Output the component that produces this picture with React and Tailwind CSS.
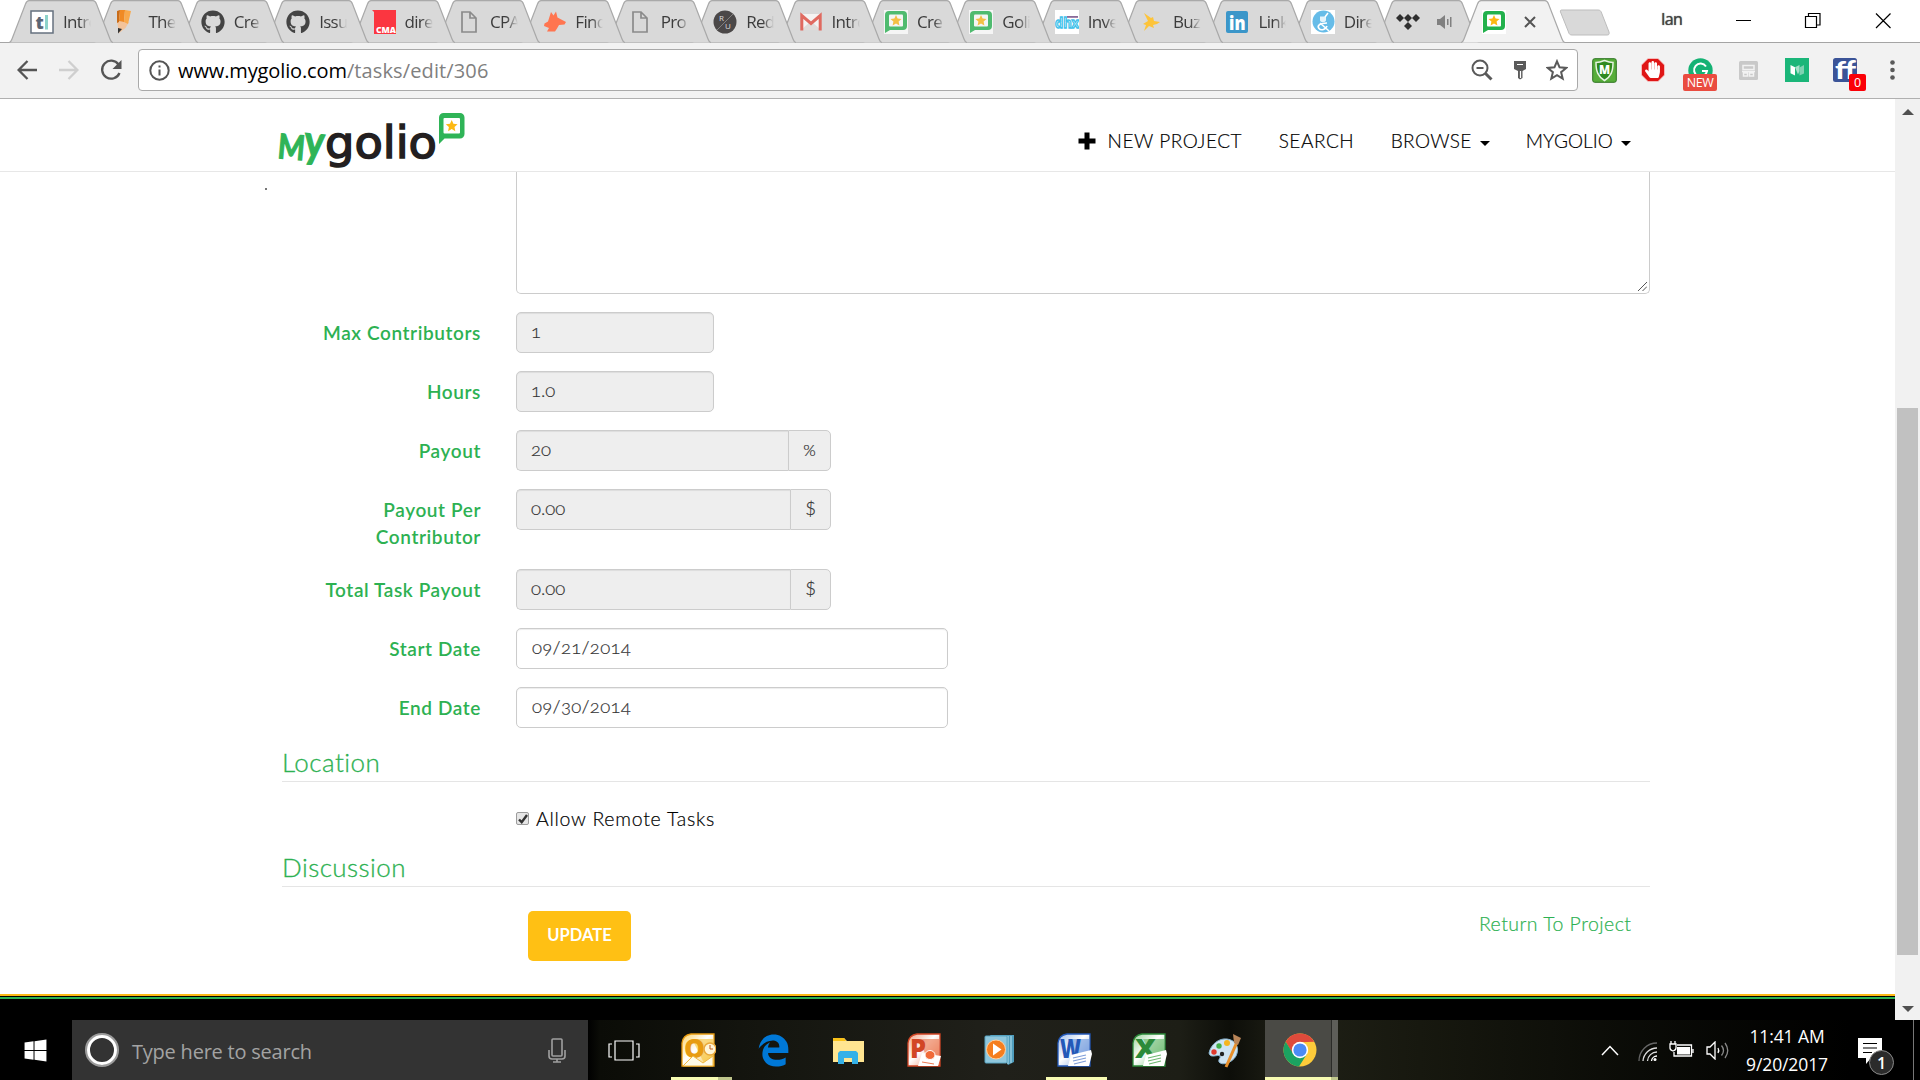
import React from 'react';
import { FaGithub, FaEdgeLegacy, FaWindows, FaHandPaper } from 'react-icons/fa';

function GolioIcon({ muted }) {
  return (
    <svg width="24" height="24" viewBox="0 0 24 24" className={muted ? 'opacity-75' : ''}>
      <rect width="24" height="24" fill="#fff" />
      <path d="M1 23V5a4 4 0 0 1 4-4h14a4 4 0 0 1 4 4v11a4 4 0 0 1-4 4H6z" fill="#22b14c" />
      <rect x="5" y="4.500" width="14" height="12" rx="1" fill="#fff" />
      <path d="M12 5l1.600 3.600 3.900.4-2.900 2.600.8 3.800L12 13.500l-3.400 1.900.8-3.800L6.500 9l3.900-.4z" fill="#fdb813" />
    </svg>
  );
}

const icons = {
  tl: (
    <svg width="24" height="24" viewBox="0 0 24 24">
      <rect x="1" y="1" width="22" height="22" fill="#fff" stroke="#66717f" strokeWidth="1.500" />
      <text x="5.500" y="19" fontFamily="Open Sans" fontWeight="800" fontSize="18" fill="#5b6675">t</text>
      <rect x="15" y="5" width="3" height="14.500" fill="#8ed3cb" />
    </svg>
  ),
  pencil: (
    <svg width="24" height="24" viewBox="0 0 24 24">
      <path d="M2 11l12 1-3.500 6L4 23z" fill="#f3c39a" />
      <path d="M2 1l3-1-1 12-2 1z" fill="#c96c19" />
      <path d="M5 0h5l-1 12-5-1z" fill="#f08a24" />
      <path d="M10 0l6 1-3 13-4-2z" fill="#f9a94b" />
      <path d="M3 18l4 1-4 4.500z" fill="#333" />
    </svg>
  ),
  github: <FaGithub size={24} color="#444" />,
  cma: (
    <svg width="24" height="24" viewBox="0 0 24 24">
      <path d="M0 0h24v24H2V2z" fill="#fb3640" />
      <text x="4" y="23" fontFamily="Open Sans" fontWeight="800" fontSize="8.500" fill="#fff">CMA</text>
    </svg>
  ),
  file: (
    <svg width="24" height="24" viewBox="0 0 24 24" fill="none" stroke="#8a8a8a" strokeWidth="1.700">
      <path d="M5 2h8l6 6v14H5zM13 2v6h6" />
    </svg>
  ),
  fox: (
    <svg width="24" height="24" viewBox="0 0 24 24" fill="#ff7550">
      <path d="M9 2l2.500 3.500L14 1.500l1.500 6L24 12l-1.500 2.500-5.500.5-2 3.500-2 3H5l2-3.500-5-2 .500-2.500 3.500-2z" />
    </svg>
  ),
  ru: (
    <svg width="24" height="24" viewBox="0 0 24 24">
      <circle cx="12" cy="12" r="11.500" fill="#4b4848" />
      <path d="M4 20L20 4" stroke="#999" strokeWidth=".7" />
      <text x="6" y="11" fontFamily="Open Sans" fontSize="8" fill="#ddd">R</text>
      <text x="12" y="19" fontFamily="Open Sans" fontSize="8" fill="#ddd">U</text>
    </svg>
  ),
  gmail: (
    <svg width="24" height="24" viewBox="0 0 24 24">
      <rect x="2" y="4" width="20" height="16" fill="#f5f3f2" />
      <path d="M2 20l10-9 10 9z" fill="#e0dcda" />
      <path d="M2.800 20.500V5.500L12 13.500l9.200-8v15" fill="none" stroke="#e06a60" strokeWidth="3" />
    </svg>
  ),
  golio: <GolioIcon muted />,
  golioActive: <GolioIcon />,
  dhx: (
    <svg width="24" height="24" viewBox="0 0 24 24">
      <rect width="24" height="24" fill="#fff" />
      <text x="0" y="18" fontFamily="Open Sans" fontWeight="700" fontSize="14" fill="#dff5fc" stroke="#3fc1ea" strokeWidth="1.300" textLength="24" lengthAdjust="spacingAndGlyphs">dhx</text>
      <rect x="12" y="6" width="11" height="1.800" fill="#8a6a9a" />
    </svg>
  ),
  buz: (
    <svg width="24" height="24" viewBox="0 0 24 24" fill="#fdc43a">
      <path d="M4 3l7 5 2-1 1 4 6 1-3 2-4 1 1 3-5-2-5 5 2-6-3-1 5-3z" />
    </svg>
  ),
  linkedin: (
    <svg width="24" height="24" viewBox="0 0 24 24">
      <rect x="1" y="1" width="22" height="22" rx="2" fill="#3b96c9" />
      <text x="4" y="19.500" fontFamily="Open Sans" fontWeight="800" fontSize="18.500" fill="#fff" textLength="16.500" lengthAdjust="spacingAndGlyphs">in</text>
    </svg>
  ),
  dire: (
    <svg width="24" height="24" viewBox="0 0 24 24">
      <rect width="24" height="24" fill="#fff" />
      <ellipse cx="12.500" cy="11.500" rx="11" ry="11" fill="#66bce8" />
      <path d="M9 6.500h6v3.500q0 2-3 2t-3-2z" fill="#e4f4fc" />
      <path d="M17 3l-3 4M9 13l9 8M16 13c-8 0-10 3-8 5.500s7 1 8-2.500" fill="none" stroke="#fff" strokeWidth="1.600" />
    </svg>
  ),
  tidal: (
    <svg width="24" height="24" viewBox="0 0 24 24" fill="#2f2f2f">
      <path d="M4 4l4 4-4 4-4-4zM12 4l4 4-4 4-4-4zM20 4l4 4-4 4-4-4zM12 12l4 4-4 4-4-4z" />
    </svg>
  ),
};

const tabs = [
  ['tl', 'Intro'], ['pencil', 'The'], ['github', 'Cre'], ['github', 'Issue'], ['cma', 'dire'], ['file', 'CPA'],
  ['fox', 'Find'], ['file', 'Pro'], ['ru', 'Red'], ['gmail', 'Intro'], ['golio', 'Cre'], ['golio', 'Goli'],
  ['dhx', 'Inve'], ['buz', 'Buz'], ['linkedin', 'Link'], ['dire', 'Dire'], ['tidal', 'speaker'], ['golioActive', 'close'],
];

function Tab({ icon, label }) {
  const active = label === 'close';
  return (
    <div className={active ? 'relative z-10 h-[43px] w-[85.4px] shrink-0' : 'relative h-[43px] w-[85.4px] shrink-0'}>
      <svg width="104" height="43" className="absolute left-0 top-0">
        <path
          d="M0 42.500C2 42 2.500 40.500 3 39L16.500 4C17.500 1.500 18 .7 20 .7H84C86 .7 86.500 1.500 87.500 4L101 39C101.500 40.500 102 42 104 42.500"
          fill={active ? '#f2f2f2' : '#d9d9d9'}
          stroke="#a9a9a9"
          strokeWidth="1.200"
        />
      </svg>
      <div className="relative flex items-center pl-[21px] pt-[10px]">
        <span className="block h-6 w-6 shrink-0">{icons[icon]}</span>
        {label === 'speaker' && (
          <svg width="16" height="14" viewBox="0 0 16 14" className="ml-[17px] shrink-0" fill="#808080">
            <path d="M0 4h3l5-4v14l-5-4H0zM10 4h1.500v6H10zM13 2h1.500v10H13z" />
          </svg>
        )}
        {active && (
          <svg width="12" height="12" viewBox="0 0 12 12" className="ml-[18px] shrink-0" stroke="#555" strokeWidth="2">
            <path d="M1 1l10 10M11 1L1 11" />
          </svg>
        )}
        {label !== 'speaker' && !active && (
          <span className="ml-[9px] block w-[28px] overflow-hidden whitespace-nowrap font-['Open_Sans'] text-[17px] leading-6 tracking-[-0.7px] text-[#3c3c3c] [mask-image:linear-gradient(to_right,black_60%,transparent)]">
            {label}
          </span>
        )}
      </div>
    </div>
  );
}

function TabStrip() {
  return (
    <div className="relative flex h-[43px] bg-white pl-[9px]">
      <div className="absolute inset-x-0 bottom-0 h-px bg-[#a5a5a5]" />
      <div className="relative flex flex-row-reverse">
        {[...tabs].reverse().map(([icon, label], i) => <Tab key={i} icon={icon} label={label} />)}
      </div>
      <svg width="54" height="28" viewBox="0 0 54 28" className="ml-[13px] mt-[9px]">
        <path d="M3 1H39C41 1 42 2 42.600 4L50 23C50.500 25 50 26 48 26H13C11 26 10 25 9.500 23L1.500 3C1 1.500 1.500 1 3 1z" fill="#d9d9d9" stroke="#bdbdbd" />
      </svg>
      <div className="ml-auto flex pr-[29px] pt-[9px]">
        <span className="mr-[54px] mt-[-1px] font-['Open_Sans'] text-[16px] leading-[22px] tracking-[-0.7px] text-[#444] [text-shadow:0_0_1px_#333]">Ian</span>
        <svg width="155" height="22" viewBox="0 0 155 22" fill="none" stroke="#000" strokeWidth="1.200">
          <path d="M0 11.500h15M69.500 7.500h11v11h-11zM72.500 7.500v-3h11.500v11.500h-3.500M140 4.500l14.500 14.500M154.500 4.500L140 19" />
        </svg>
      </div>
    </div>
  );
}

function Toolbar() {
  return (
    <div className="flex h-14 items-center border-b border-[#b0b0b0] bg-[#f2f2f2] pl-[17px] pb-px">
      <svg width="106" height="24" viewBox="0 0 106 24" fill="none" strokeWidth="2.300">
        <path d="M20 12H2M10.500 3L1.600 12l8.900 9" stroke="#555" />
        <path d="M42 12h18M51.500 3l8.900 9-8.900 9" stroke="#cfcfcf" />
        <path d="M101.500 6.500A9 9 0 1 0 102.500 15" stroke="#555" />
        <path d="M104.500 2v9h-9z" fill="#555" />
      </svg>
      <div className="ml-[15px] flex h-[42px] w-[1440px] items-center rounded-[4px] border border-[#a9a9a9] bg-white pl-[10px]">
        <svg width="21" height="21" viewBox="0 0 21 21" fill="none" stroke="#555" strokeWidth="2">
          <circle cx="10.500" cy="10.500" r="9.200" />
          <path d="M10.500 9.500v6M10.500 5.500v2" />
        </svg>
        <span className="ml-2 mt-0.5 font-['Open_Sans'] text-[20px] leading-[26px] tracking-[-0.12px] text-black">www.mygolio.com</span>
        <span className="mt-0.5 font-['Open_Sans'] text-[20px] leading-[26px] tracking-[0.12px] text-[#808080]">/tasks/edit/306</span>
        <svg width="22" height="22" viewBox="0 0 22 22" fill="none" stroke="#5a5a5a" strokeWidth="2" className="ml-auto">
          <circle cx="9" cy="9" r="7.500" /><path d="M14.500 14.500l6 6" strokeWidth="3" /><path d="M5.500 9h7" />
        </svg>
        <svg width="14" height="20" viewBox="0 0 14 20" className="ml-[20px]">
          <path d="M1 1h12v8l-3.500 2v7L7 19.500 5 18v-7L1 9z" fill="#5a5a5a" /><path d="M4 4.500h6M7.500 11v7" stroke="#fff" strokeWidth="1.200" />
        </svg>
        <svg width="22" height="22" viewBox="0 0 24 24" fill="none" stroke="#5a5a5a" strokeWidth="2.200" className="ml-[19px] mr-[9px]">
          <path d="M12 2.500l2.800 6.600 7.200.6-5.500 4.700 1.700 7L12 17.600l-6.200 3.800 1.700-7L2 9.700l7.200-.6z" />
        </svg>
      </div>
      <div className="relative ml-[14px] flex items-center">
        <svg width="25" height="25" viewBox="0 0 25 25">
          <rect x=".7" y=".7" width="23.600" height="23.600" rx="2" fill="#57ad3a" stroke="#2c7420" />
          <path d="M4 4.500c3 0 6-1 8.500-2 2.500 1 5.500 2 8.500 2 0 9-2 14-8.500 18C6 18.500 4 13.500 4 4.500z" fill="#2f8a20" stroke="#e6f3e2" strokeWidth="1.500" />
          <text x="7" y="15.500" fontFamily="Open Sans" fontWeight="800" fontSize="11.500" fill="#fff">M</text>
        </svg>
        <span className="relative ml-6 block h-[24px] w-[24px]">
          <svg width="24" height="24" viewBox="0 0 24 24"><path d="M7 .5h10L23.500 7v10L17 23.500H7L.5 17V7z" fill="#e01616" stroke="#f7c9c9" strokeWidth=".8" /></svg>
          <FaHandPaper size={17} color="#fff" className="absolute left-[3px] top-[3px]" />
        </span>
        <span className="relative ml-[23px] block h-[25px] w-[25px]">
          <svg width="25" height="25" viewBox="0 0 25 25"><circle cx="12.500" cy="12.500" r="12.200" fill="#15b274" /><path d="M18 8.500A6.500 6.500 0 1 0 19 13h-5" fill="none" stroke="#fff" strokeWidth="2" /></svg>
          <span className="absolute left-[-5px] top-[16px] block h-[17px] w-[34px] rounded-[2px] bg-[#ea4c40] text-center font-['Open_Sans'] text-[12.500px] leading-[18px] tracking-[-0.4px] text-white">NEW</span>
        </span>
        <svg width="19" height="19" viewBox="0 0 19 19" className="ml-[26px]">
          <rect width="19" height="19" rx="1.500" fill="#c9c9c9" />
          <path d="M4 4.500h11v4H4zM3 10.500h13M4.500 12h4v3h-4zM10.500 12h4v3h-4z" fill="none" stroke="#f2f2f2" strokeWidth="1.500" />
        </svg>
        <svg width="24" height="24" viewBox="0 0 24 24" className="ml-[27px]">
          <rect width="24" height="24" fill="#1bb679" />
          <path d="M5.500 7l4.500 2.200v8.300l-4.500-2.200z" fill="#fff" /><path d="M10 9.200l4.500-2.200v6l-1.500 3.500z" fill="#a6e0c9" /><path d="M14.500 9.500L19 7v8.500l-4.500 2z" fill="#7fd2b2" />
        </svg>
        <span className="relative ml-[24px] block h-6 w-6">
          <svg width="24" height="24" viewBox="0 0 24 24">
            <rect width="24" height="24" rx="2.500" fill="#3b5498" />
            <text x="2" y="21" fontFamily="Lato" fontWeight="900" fontSize="25" fill="#fff" textLength="21" lengthAdjust="spacingAndGlyphs">ff</text>
          </svg>
          <span className="absolute left-[16px] top-[16px] block h-[17px] w-[17px] rounded-[2px] bg-[#fb0007] text-center font-['Open_Sans'] text-[12.500px] leading-[18px] text-white">0</span>
        </span>
        <svg width="5" height="20" viewBox="0 0 5 20" fill="#5a5a5a" className="ml-[33px]">
          <circle cx="2.500" cy="2.500" r="2.300" /><circle cx="2.500" cy="10" r="2.300" /><circle cx="2.500" cy="17.500" r="2.300" />
        </svg>
      </div>
    </div>
  );
}

function Logo() {
  return (
    <svg width="188" height="60" viewBox="278 111 188 60" className="ml-[278px] mt-3 block overflow-visible">
      <g fill="#2fb457" stroke="#2fb457" strokeWidth="1.200" transform="rotate(5 300 147)">
        <text x="278" y="160" fontFamily="Lato" fontWeight="700" fontSize="34" textLength="27" lengthAdjust="spacingAndGlyphs">M</text>
        <text x="304" y="156" fontFamily="Lato" fontWeight="700" fontSize="45" textLength="20" lengthAdjust="spacingAndGlyphs">y</text>
      </g>
      <text x="325" y="158" className="font-['DejaVu_Sans']" fontSize="44.500" fill="#231f20" stroke="#231f20" strokeWidth="1.500" textLength="112" lengthAdjust="spacingAndGlyphs">golio</text>
      <path d="M439 144v-26.500a4.500 4.500 0 0 1 4.500-4.500h16.500a4.500 4.500 0 0 1 4.500 4.500v16.500a4.500 4.500 0 0 1-4.500 4.500H444.500z" fill="#2fb457" />
      <rect x="443.500" y="118" width="16.500" height="15.500" rx="1" fill="#fff" />
      <path d="M451.700 120l1.700 3.700 4.200.5-3.100 2.800.8 4.200-3.600-2.100-3.600 2.100.8-4.200-3.100-2.800 4.200-.5z" fill="#fdb913" />
    </svg>
  );
}

function Caret() {
  return <span className="ml-2 mt-[5px] block border-x-[5px] border-t-[5px] border-x-transparent border-t-black" />;
}

function Nav() {
  return (
    <div className="flex h-[73px] items-start border-b border-[#e7e7e7] bg-white">
      <Logo />
      <nav className="ml-auto mr-[264px] mt-[28px] flex h-[27px] items-center font-['Lato'] text-[19px] font-light leading-[27px] tracking-[0.55px] text-black [-webkit-text-stroke:0.2px]">
        <span className="flex items-center">
          <svg width="18" height="18" viewBox="0 0 18 18" className="mr-[12px]"><path d="M6.500 .5h5v6h6v5h-6v6h-5v-6h-6v-5h6z" /></svg>
          NEW PROJECT
        </span>
        <span className="ml-[36.500px]">SEARCH</span>
        <span className="ml-[36.500px] flex items-center tracking-[0.35px]">BROWSE<Caret /></span>
        <span className="ml-[36px] flex items-center tracking-[0.1px]">MYGOLIO<Caret /></span>
      </nav>
    </div>
  );
}

function Row({ label, children }) {
  return (
    <div className="mt-[18px] flex items-start">
      <label className="mr-[-1px] w-[199px] shrink-0 pt-[7px] text-right text-[19px] font-semibold leading-[27px] tracking-[0.6px] text-[#2db152]">{label}</label>
      <div className="ml-9 mb-[-7px] flex h-[41px]">{children}</div>
    </div>
  );
}

const value = "flex items-center border border-[#ccc] pb-[2px] shadow-[inset_0_1px_1px_rgba(0,0,0,0.075)] text-[18.500px] font-light text-[#333] [-webkit-text-stroke:0.2px] [font-feature-settings:'onum']";

function Field({ text, wide }) {
  return (
    <div className={`${value} ${wide ? 'w-[432px] bg-white pl-[15px] tracking-[0.3px]' : 'w-[198px] bg-[#eee] pl-[14px]'} rounded-[5px]`}>{text}</div>
  );
}

function Addon({ text, unit }) {
  return (
    <>
      <div className={`${value} ${unit === '%' ? 'w-[272px]' : 'w-[274px]'} rounded-l-[5px] border-r-0 bg-[#eee] pl-[14px]`}>{text}</div>
      <div className={`${unit === '%' ? 'w-[43px] text-[16px]' : 'w-[41px] text-[18.500px]'} flex items-center justify-center rounded-r-[5px] border border-[#ccc] bg-[#eee] pb-0.5 font-light text-[#333] [-webkit-text-stroke:0.2px]`}>{unit}</div>
    </>
  );
}

function Heading({ children, className }) {
  return <h3 className={`${className} mr-[245px] border-b border-[#e5e5e5] text-[26px] font-light leading-[37px] tracking-[0.45px] text-[#2db152] [-webkit-text-stroke:0.3px]`}>{children}</h3>;
}

function Page() {
  return (
    <div className="flex h-[921px]">
      <div className="flex w-[1895px] flex-col overflow-hidden bg-white font-['Lato']">
        <Nav />
        <div className="flex h-[122px] shrink-0">
          <span className="ml-[264.500px] mt-[16px] h-[2px] w-[2px] bg-[#777]" />
          <div className="ml-[249.500px] flex w-[1134px] items-end justify-end rounded-b-[5px] border border-t-0 border-[#ccc] p-0.5">
            <svg width="9" height="9" viewBox="0 0 9 9" stroke="#555" strokeWidth="1"><path d="M0 9L9 0M4.500 9L9 4.500" /></svg>
          </div>
        </div>
        <div className="pl-[282px]">
          <Row label="Max Contributors"><Field text="1" /></Row>
          <div className="h-[7px]" />
          <Row label="Hours"><Field text="1.0" /></Row>
          <div className="h-[7px]" />
          <Row label="Payout"><Addon text="20" unit="%" /></Row>
          <div className="h-[7px]" />
          <Row label={<>Payout Per<br />Contributor</>}><Addon text="0.00" unit="$" /></Row>
          <div className="h-px" />
          <Row label="Total Task Payout"><Addon text="0.00" unit="$" /></Row>
          <div className="h-[7px]" />
          <Row label="Start Date"><Field text="09/21/2014" wide /></Row>
          <div className="h-[7px]" />
          <Row label="End Date"><Field text="09/30/2014" wide /></Row>
          <Heading className="mt-[23px]">Location</Heading>
          <div className="mt-[23px] flex h-[27px] items-center pl-[234px] text-[19.500px] font-light leading-[27px] tracking-[0.75px] text-black [-webkit-text-stroke:0.2px]">
            <span className="mr-[7px] flex h-[13px] w-[13px] items-center justify-center rounded-[2px] border border-[#9c9c9c] bg-[#e6e6e6]">
              <svg width="10" height="10" viewBox="0 0 10 10" fill="none" stroke="#333" strokeWidth="2.400"><path d="M1 5.500l2.700 2.700L9 1" /></svg>
            </span>
            Allow Remote Tasks
          </div>
          <Heading className="mt-[17px]">Discussion</Heading>
          <div className="mt-6 flex items-start pl-[246px]">
            <button className="h-[50px] w-[103px] rounded-[5px] bg-[#ffc014] pb-px text-center text-[16.500px] font-bold leading-[49px] text-white">UPDATE</button>
            <a className="ml-auto mr-[263.500px] text-[19.500px] font-light leading-[26px] tracking-[0.46px] text-[#2db152] [-webkit-text-stroke:0.2px]">Return To Project</a>
          </div>
        </div>
        <div className="mt-[33px] h-[2px] shrink-0 bg-[#fdb913]" />
        <div className="h-px shrink-0 bg-black" />
        <div className="h-[2px] shrink-0 bg-[#2db152]" />
        <div className="grow bg-black" />
      </div>
      <div className="flex w-[25px] flex-col items-center bg-[#f1f1f1]">
        <span className="mt-[10px] block border-x-[6px] border-b-[6px] border-x-transparent border-b-[#505050]" />
        <span className="mt-[293px] block h-[547px] w-[21px] bg-[#c1c1c1]" />
        <span className="mb-[8px] mt-auto block border-x-[6px] border-t-[6px] border-x-transparent border-t-[#505050]" />
      </div>
    </div>
  );
}

function OfficeIcon({ letter, from, to, ink, children }) {
  return (
    <svg width="35" height="34" viewBox="0 0 35 34">
      <defs><linearGradient id={`office-${letter}`} x1="0" y1="0" x2="1" y2="1"><stop offset="0" stopColor={from} /><stop offset=".45" stopColor="#fff" /><stop offset="1" stopColor={to} /></linearGradient></defs>
      <path d="M10 1h23v32H1V10Q2 2 10 1z" fill={`url(#office-${letter})`} stroke={ink} strokeWidth="1.300" />
      <path d="M11 6h21v26h-8z" fill={to} opacity=".65" />
      <text x="3" y="25" fontFamily="Open Sans" fontWeight="800" fontSize="26" fill={ink} textLength={letter === 'P' ? 16 : 21} lengthAdjust="spacingAndGlyphs">{letter}</text>
      {children}
    </svg>
  );
}

function Sheet({ color }) {
  return (
    <g>
      <path d="M14 22l20-5 1 4-3 12H11z" fill="#fff" />
      <path d="M16 25l13-3M16 28l13-3M17 31l12-3" stroke={color} strokeWidth="1.200" />
    </g>
  );
}

const apps = [
  [<OfficeIcon letter="O" from="#fbd36c" to="#f7c644" ink="#e89c12"><path d="M2 33l10-10 10 7 10-7v10z" fill="#fffbe8" stroke="#efb844" /><circle cx="29" cy="16" r="6" fill="#fff6d8" stroke="#e9a93c" strokeWidth="1.500" /><path d="M29 12v4h3" fill="none" stroke="#c05a20" /></OfficeIcon>, 'open'],
  [<FaEdgeLegacy size={33} color="#0078d7" />],
  [<svg width="33" height="27" viewBox="0 0 33 27"><path d="M1 1h11l3 3h17v21H1z" fill="#ffe591" /><path d="M1 1h11l2 3H1z" fill="#f9c119" /><path d="M6 27V16l2-2h16l2 2v11h-6v-6h-8v6z" fill="#35b1e8" /></svg>],
  [<OfficeIcon letter="P" from="#f3a184" to="#eb7a52" ink="#d24625"><path d="M15 20l19 3-3 10H11z" fill="#fff" /><ellipse cx="23" cy="22" rx="5" ry="4.500" fill="#f06a38" stroke="#fff" /><path d="M15 29l12 2" stroke="#eb7a52" /></OfficeIcon>],
  [<svg width="31" height="30" viewBox="0 0 31 30"><path d="M6 0h24v27l-6 3z" fill="#4f9dbd" /><path d="M27 1v27M24 1v28" stroke="#b9e2f0" /><rect x="1" y="1" width="22" height="27" rx="1" fill="#8fc7dd" stroke="#5aa6c4" /><circle cx="12" cy="14.500" r="9.500" fill="#f57e1f" stroke="#ffd0a0" /><path d="M9 8.500v12l8.500-6z" fill="#fff" /></svg>],
  [<OfficeIcon letter="W" from="#9dbcec" to="#6f98dc" ink="#2358b8"><Sheet color="#7d9dd8" /></OfficeIcon>, 'open'],
  [<OfficeIcon letter="X" from="#9bd39b" to="#67b96b" ink="#2c8a3a"><Sheet color="#6db870" /></OfficeIcon>],
  [<svg width="36" height="35" viewBox="0 0 36 35"><path d="M2 20C4 11 12 5 20 6c9 1 13 9 9 17-4 7-14 10-17 6-1-3 2-4 1-6-2-2-10 3-11-3z" fill="#cfe4f2" stroke="#88b3cf" /><circle cx="7" cy="19" r="2.700" fill="#e0392c" /><circle cx="12" cy="13" r="2.700" fill="#3fae49" /><circle cx="20" cy="10" r="3" fill="#f5b51e" /><circle cx="15" cy="21" r="2.200" fill="#222" /><path d="M30 9L19 34" stroke="#e8902c" strokeWidth="3" /><path d="M26 1l8 4-3 7-4-2z" fill="#b98558" /></svg>],
  [<svg width="34" height="34" viewBox="0 0 34 34"><circle cx="17" cy="17" r="16.500" fill="#fdcb3a" /><path d="M2.700 8.700A16.500 16.500 0 0 1 31.300 8.800L17 9.200 9.800 21z" fill="#de4a3b" /><path d="M2.700 8.700A16.500 16.500 0 0 0 16 33.500L23.900 21 10 20.600z" fill="#1ba261" /><circle cx="17" cy="17" r="8.200" fill="#fff" /><circle cx="17" cy="17" r="6.600" fill="#4b8bf4" /></svg>, 'active'],
];

function Taskbar() {
  return (
    <div className="flex h-[60px] bg-black bg-[linear-gradient(90deg,#000_588px,#0b0c07_600px,#14150f_760px,#20201a_1000px,#1d1e16_1180px,#0d0e09_1230px,#1f2016_1290px,#17180f_1420px,#0c0d08_1600px,#000_1850px)]">
      <div className="flex w-[72px] items-center justify-center pr-0.5"><FaWindows size={25} color="#fff" /></div>
      <div className="flex w-[516px] items-center bg-[#333] pl-3">
        <svg width="36" height="36" viewBox="0 0 36 36" fill="none"><circle cx="18" cy="18" r="15.800" stroke="#9b9b9b" strokeWidth="2.500" /><circle cx="18" cy="18" r="13.500" stroke="#fff" strokeWidth="3" /></svg>
        <span className="ml-[12px] mt-[2px] font-['Open_Sans'] text-[20px] leading-[27px] tracking-[-0.22px] text-[#a3a3a3]">Type here to search</span>
        <svg width="18" height="25" viewBox="0 0 18 25" fill="none" stroke="#a0a0a0" strokeWidth="1.600" className="ml-auto mr-[22px]"><rect x="4" y="1" width="10" height="17" rx="1" /><path d="M1 12v6q0 3 3 3h10q3 0 3-3v-6M9 21v3M5 24h8" /></svg>
      </div>
      <div className="flex w-[74.500px] items-center justify-center pr-[3px]">
        <svg width="32" height="21" viewBox="0 0 32 21" fill="none" stroke="#fff" strokeWidth="1.200"><path d="M7 1h18v19H7zM4 4H1v13h3M28 4h3v13h-3" /></svg>
      </div>
      {apps.map(([icon, state], i) => (
        <div key={i} className="relative flex w-[75.200px] items-center justify-center pr-[3px]">
          {state === 'active' && <span className="absolute inset-y-0 left-px right-px flex bg-[#4a4a45]"><span className="ml-auto w-[7px] border-l border-[#2b2b28] bg-[#5e5e59]" /></span>}
          <span className="relative flex">{icon}</span>
          {state && (
            <span className={`${state === 'open' ? 'left-[8px] w-[61px]' : 'inset-x-px'} absolute bottom-0 flex h-[3px] bg-[#f7fbb2]`}>
              {i !== 5 && <span className={`${i === 0 ? 'w-[14px]' : 'w-[7px]'} ml-auto bg-[#bfc68c]`} />}
            </span>
          )}
        </div>
      ))}
      <div className="ml-auto flex items-center">
        <svg width="18" height="11" viewBox="0 0 18 11" fill="none" stroke="#fff" strokeWidth="1.500"><path d="M1 10l8-8.500L17 10" /></svg>
        <svg width="19" height="19" viewBox="0 0 19 19" fill="none" className="ml-[19px] mt-0.5">
          <path d="M1 19A18 18 0 0 1 19 1" stroke="#666" strokeWidth="1.300" /><path d="M5 19A14 14 0 0 1 19 6M9.500 19a9.500 9.500 0 0 1 9.500-9" stroke="#ddd" strokeWidth="1.300" /><path d="M13.500 19a5.500 5.500 0 0 1 5.500-5" stroke="#fff" strokeWidth="1.300" /><circle cx="17" cy="17.500" r="1.500" fill="#fff" />
        </svg>
        <svg width="25" height="17" viewBox="0 0 25 17" fill="none" stroke="#fff" strokeWidth="1.300" className="mb-0.5 ml-[12px]"><path d="M8 4h14.500v11H5v-4M24 8v4M2 0v3M6 0v3M1 3h6v4q0 2-3 3-3-1-3-3z" /><rect x="8" y="6" width="13" height="7.500" fill="#fff" stroke="none" /></svg>
        <svg width="23" height="19" viewBox="0 0 23 19" fill="none" className="ml-[12px]"><path d="M1 6h3l5-5v17l-5-5H1z" stroke="#fff" strokeWidth="1.300" /><path d="M12 7q1.500 2.500 0 5" stroke="#fff" strokeWidth="1.300" /><path d="M15.500 4.500q4 5 0 10M19 2q5.500 7.500 0 15" stroke="#888" strokeWidth="1.300" /></svg>
        <div className="ml-[16px] w-[84px] text-center font-['Open_Sans'] text-[17.500px] leading-[28px] tracking-[-0.1px] text-white">
          <div>11:41 AM</div>
          <div>9/20/2017</div>
        </div>
        <span className="relative ml-[29px] block h-6 w-6">
          <svg width="25" height="27" viewBox="0 0 25 27"><path d="M0 0h24v20H13l-5 6v-6H0z" fill="#fff" /><path d="M5 5.500h14M5 10h14M5 14.500h9" stroke="#000" strokeWidth="1.200" /></svg>
          <span className="absolute left-[11px] top-[12px] flex h-[25px] w-[25px] items-center justify-center rounded-full border border-[#8a8a8a] bg-[#2b2b2b] font-['Open_Sans'] text-[16px] font-semibold text-white">1</span>
        </span>
        <span className="ml-[31px] mr-[6px] h-[60px] w-px bg-[#777]" />
      </div>
    </div>
  );
}

export default function App() {
  return (
    <div className="h-[1080px] w-[1920px] overflow-hidden bg-white">
      <TabStrip />
      <Toolbar />
      <Page />
      <Taskbar />
    </div>
  );
}
